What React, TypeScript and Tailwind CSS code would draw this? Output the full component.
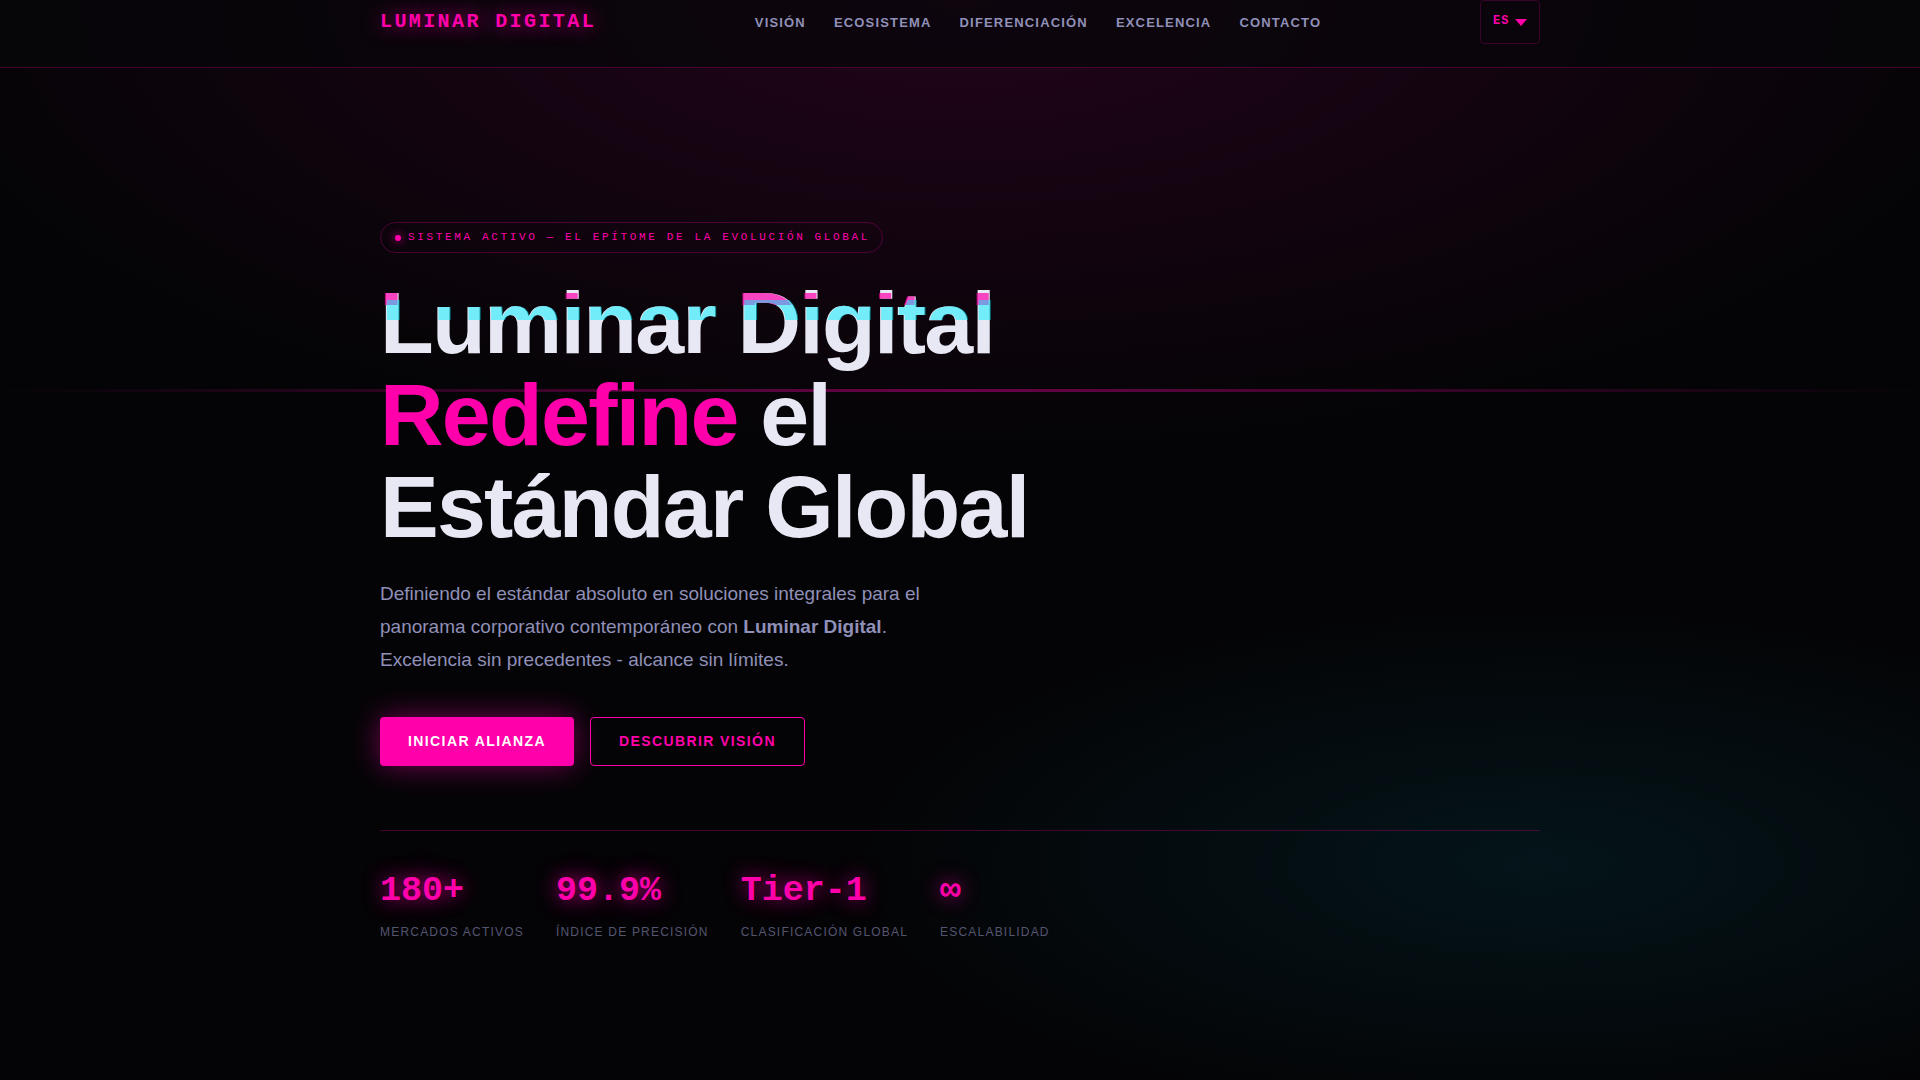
const navLinks = [
  { label: 'Visión', href: '#vision' },
  { label: 'Ecosistema', href: '#ecosistema' },
  { label: 'Diferenciación', href: '#diferenciacion' },
  { label: 'Excelencia', href: '#excelencia' },
  { label: 'Contacto', href: '#contacto' },
];

const stats = [
  { value: '180+', label: 'Mercados activos' },
  { value: '99.9%', label: 'Índice de precisión' },
  { value: 'Tier-1', label: 'Clasificación global' },
  { value: '∞', label: 'Escalabilidad' },
];

function Header() {
  return (
    <header className="relative z-10 border-b border-[#ff00aa]/25 bg-[#050508]/70">
      <div className="mx-auto flex h-[67px] max-w-[1200px] items-start justify-between px-5">
        <a
          href="#"
          className="flex h-11 items-center font-['Liberation_Mono',monospace] text-[20px] font-bold uppercase tracking-[0.12em] text-[#ff00aa] [text-shadow:0_0_20px_rgba(255,0,170,0.8),0_0_60px_rgba(255,0,170,0.2)]"
        >
          Luminar Digital
        </a>
        <nav className="flex h-[46px] items-center gap-7">
          {navLinks.map((link) => (
            <a key={link.href} href={link.href} className="text-[13px] font-semibold uppercase tracking-[0.09em] text-[#9090b8]">
              {link.label}
            </a>
          ))}
        </nav>
        <div className="flex h-11 w-[60px] items-center justify-center gap-0.5 rounded border border-[#ff00aa]/20 text-[#ff00aa]">
          <select
            aria-label="Idioma"
            defaultValue="ES"
            className="w-5 cursor-pointer appearance-none bg-transparent pb-[3px] font-['Liberation_Mono',monospace] text-[12px] font-bold tracking-[1px] outline-none"
          >
            <option>ES</option>
            <option>EN</option>
          </select>
          <svg width="12" height="7" viewBox="0 0 12 7" fill="currentColor" aria-hidden="true">
            <path d="M0 0h12L6 7z" />
          </svg>
        </div>
      </div>
    </header>
  );
}

function GlitchText({ text }: { text: string }) {
  return (
    <span
      data-text={text}
      className="relative block w-fit before:absolute before:top-0 before:-left-px before:whitespace-nowrap before:text-[#ff00aa] before:opacity-70 before:content-[attr(data-text)] before:[clip-path:inset(16px_-4px_64px_-4px)] after:absolute after:top-0 after:left-px after:whitespace-nowrap after:text-[#00f0ff] after:opacity-50 after:content-[attr(data-text)] after:[clip-path:inset(23px_-4px_49px_-4px)]"
    >
      {text}
    </span>
  );
}

function Hero() {
  return (
    <main className="mx-auto max-w-[1200px] px-5 pt-[154px] pb-[120px]">
      <div className="flex h-[31px] w-fit items-center gap-[7px] rounded-full border border-[#ff00aa]/25 pr-3 pl-[14px]">
        <span className="mt-px size-1.5 rounded-full bg-[#ff00aa] shadow-[0_0_10px_#ff00aa]" />
        <span className="font-['Liberation_Mono',monospace] text-[11px] leading-none uppercase tracking-[0.24em] text-[#ff00aa]">
          Sistema activo — El epítome de la evolución global
        </span>
      </div>

      <h1 className="mt-6 text-[88px] leading-[92px] font-bold tracking-[-0.02em] text-[#e8e8f5]">
        <GlitchText text="Luminar Digital" />
        <span className="text-[#ff00aa]">Redefine</span> el
        <br />
        Estándar Global
      </h1>

      <p className="mt-6 max-w-[560px] text-[19px] leading-[33px] text-[#9090b8]">
        Definiendo el estándar absoluto en soluciones integrales para el panorama corporativo contemporáneo con{' '}
        <strong>Luminar Digital</strong>. Excelencia sin precedentes - alcance sin límites.
      </p>

      <div className="mt-[41px] flex gap-4">
        <button className="h-[49px] rounded bg-[#ff00aa] px-7 text-[14px] font-bold uppercase tracking-[0.1em] text-white shadow-[0_0_30px_rgba(255,0,170,0.45)]">
          Iniciar alianza
        </button>
        <button className="h-[49px] rounded border border-[#ff00aa] px-7 text-[14px] font-bold uppercase tracking-[0.1em] text-[#ff00aa]">
          Descubrir visión
        </button>
      </div>

      <dl className="mt-16 flex gap-8 border-t border-[#ff00aa]/25 pt-10">
        {stats.map((stat) => (
          <div key={stat.label} className="flex flex-col-reverse gap-[11px]">
            <dt className="text-[12px] leading-5 uppercase tracking-[0.1em] text-[#555570]">{stat.label}</dt>
            <dd className="font-['Liberation_Mono',monospace] text-[35px] leading-10 font-bold text-[#ff00aa] [text-shadow:0_0_20px_rgba(255,0,170,0.8),0_0_60px_rgba(255,0,170,0.2)]">
              {stat.value}
            </dd>
          </div>
        ))}
      </dl>
    </main>
  );
}

export default function App() {
  return (
    <div className="relative isolate min-h-screen overflow-hidden bg-[#040406] bg-[radial-gradient(ellipse_80%_60%_at_50%_0%,rgba(255,0,170,0.12),transparent_70%),radial-gradient(ellipse_60%_40%_at_80%_80%,rgba(0,212,255,0.08),transparent_60%)] font-['Liberation_Sans',sans-serif]">
      <div className="absolute inset-x-0 top-[36%] -z-10 h-[3px] bg-linear-to-r from-transparent via-[#ff00aa] to-transparent opacity-40" />
      <Header />
      <Hero />
    </div>
  );
}
